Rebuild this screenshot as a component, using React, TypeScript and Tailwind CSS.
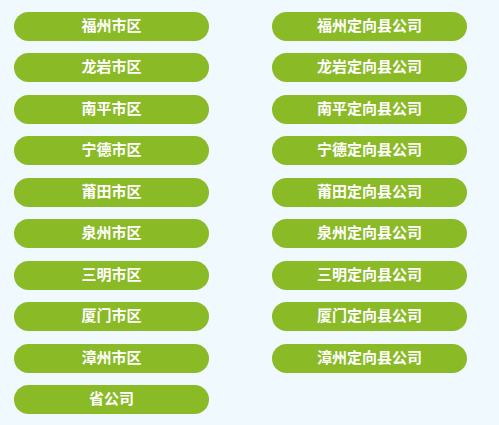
const left = [
  "福州市区",
  "龙岩市区",
  "南平市区",
  "宁德市区",
  "莆田市区",
  "泉州市区",
  "三明市区",
  "厦门市区",
  "漳州市区",
  "省公司",
];

const right = [
  "福州定向县公司",
  "龙岩定向县公司",
  "南平定向县公司",
  "宁德定向县公司",
  "莆田定向县公司",
  "泉州定向县公司",
  "三明定向县公司",
  "厦门定向县公司",
  "漳州定向县公司",
];

function OrgButton({ label }: { label: string }) {
  return (
    <button className="w-[195px] h-[29px] rounded-full bg-[#8aba26] text-white text-[15px] font-bold leading-[26px] pb-[3px] text-center">
      {label}
    </button>
  );
}

export default function App() {
  return (
    <div
      className="w-[499px] h-[425px] bg-[#eff9fe] pt-[11.5px] pl-[14px] flex gap-[63px]"
      style={{ fontFamily: '"Microsoft YaHei", "Noto Sans CJK SC", sans-serif' }}
    >
      <div className="flex flex-col gap-[12.5px]">
        {left.map((name) => (
          <OrgButton key={name} label={name} />
        ))}
      </div>
      <div className="flex flex-col gap-[12.5px]">
        {right.map((name) => (
          <OrgButton key={name} label={name} />
        ))}
      </div>
    </div>
  );
}
